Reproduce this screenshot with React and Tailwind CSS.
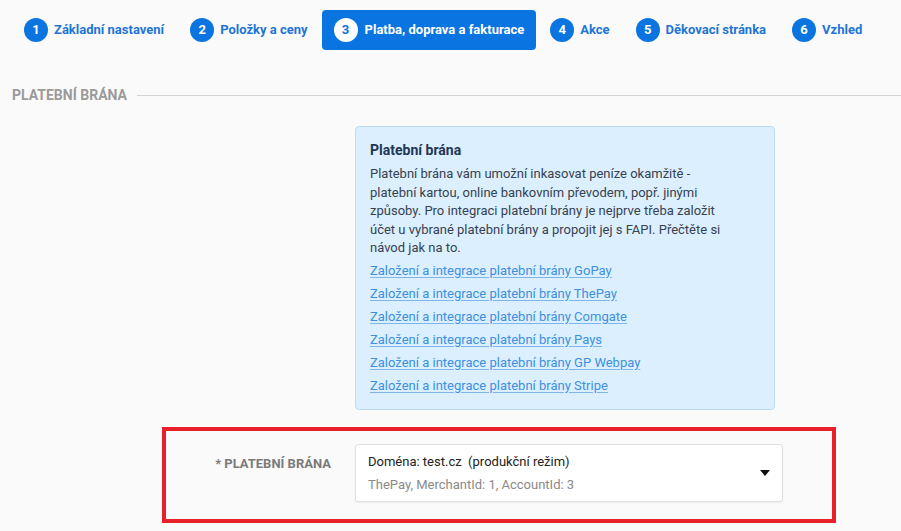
const STEPS = [
  { n: 1, label: 'Základní nastavení' },
  { n: 2, label: 'Položky a ceny' },
  { n: 3, label: 'Platba, doprava a fakturace', active: true },
  { n: 4, label: 'Akce' },
  { n: 5, label: 'Děkovací stránka' },
  { n: 6, label: 'Vzhled' },
]

const GATEWAYS = ['GoPay', 'ThePay', 'Comgate', 'Pays', 'GP Webpay', 'Stripe']

function Step({ step }) {
  if (step.active) {
    return (
      <div className="shrink-0 whitespace-nowrap flex items-center gap-[7px] h-10 px-3 rounded bg-[#0a74e0]">
        <span className="w-6 h-6 rounded-full bg-white text-[#0a74e0] text-[13px] font-bold flex items-center justify-center">
          {step.n}
        </span>
        <span className="text-white text-[13px] font-bold">{step.label}</span>
      </div>
    )
  }
  return (
    <div className="shrink-0 whitespace-nowrap flex items-center gap-[6px] h-10 px-3">
      <span className="w-6 h-6 rounded-full bg-[#0a74e0] text-white text-[13px] font-bold flex items-center justify-center">
        {step.n}
      </span>
      <span className="text-[#1f75d6] text-[13px] font-bold">{step.label}</span>
    </div>
  )
}

export default function App() {
  return (
    <div className="w-[901px] h-[531px] overflow-hidden bg-[#fafafa]" style={{ fontFamily: 'Roboto, "Noto Sans", sans-serif' }}>
      {/* Steps */}
      <div className="flex items-start gap-[2px] pl-3 pt-[10px] h-[60px]">
        {STEPS.map(s => (
          <Step key={s.n} step={s} />
        ))}
      </div>

      {/* Section heading */}
      <div className="flex items-center gap-[10px] pl-3 mt-[26px] h-[18px]">
        <span className="text-[14px] font-bold text-[#9a9a9a] uppercase whitespace-nowrap">Platební brána</span>
        <div className="flex-1 h-px bg-[#d4d4d4]" />
      </div>

      {/* Info box */}
      <div className="ml-[355px] mt-[22px] w-[420px] h-[284px] rounded border border-[#bcdcf5] bg-[#dcefff] pl-[14px] pt-[13px]">
        <h3 className="text-[14px] font-bold text-[#1e3756] leading-[20px]">Platební brána</h3>
        <p className="mt-[5px] max-w-[360px] text-[13px] leading-[18.5px] text-[#36424f]">
          Platební brána vám umožní inkasovat peníze okamžitě - platební kartou, online bankovním převodem, popř. jinými způsoby. Pro integraci platební brány je nejprve třeba založit účet u vybrané platební brány a propojit jej s FAPI. Přečtěte si návod jak na to.
        </p>
        <div className="mt-[1px] flex flex-col">
          {GATEWAYS.map(g => (
            <a key={g} href="#" className="text-[13px] leading-[23px] text-[#3d8fe0] underline underline-offset-2 decoration-[#7db4ea]">
              Založení a integrace platební brány {g}
            </a>
          ))}
        </div>
      </div>

      {/* Highlighted form row */}
      <div className="ml-[162px] mt-[17px] w-[674px] h-[96px] border-4 border-[#e8202a] flex items-start pt-[13px]">
        <div className="w-[165px] pt-[10px] text-right text-[13px] font-bold text-[#7a7a7a] uppercase whitespace-nowrap">
          * Platební brána
        </div>
        <div className="ml-[24px] w-[428px] h-[58px] bg-white border border-[#e0e0e0] rounded-[3px] shadow-[0_1px_2px_rgba(0,0,0,0.06)] flex items-center justify-between pl-3 pr-[12px]">
          <div className="flex flex-col">
            <span className="text-[13px] leading-[20px] text-[#222]">Doména: test.cz&nbsp;&nbsp;(produkční režim)</span>
            <span className="mt-[4px] text-[13px] leading-[18px] text-[#8a8a8a]">ThePay, MerchantId: 1, AccountId: 3</span>
          </div>
          <svg width="10" height="6" viewBox="0 0 10 6" className="mt-[-1px]">
            <path d="M0 0 L10 0 L5 6 Z" fill="#111" />
          </svg>
        </div>
      </div>
    </div>
  )
}
